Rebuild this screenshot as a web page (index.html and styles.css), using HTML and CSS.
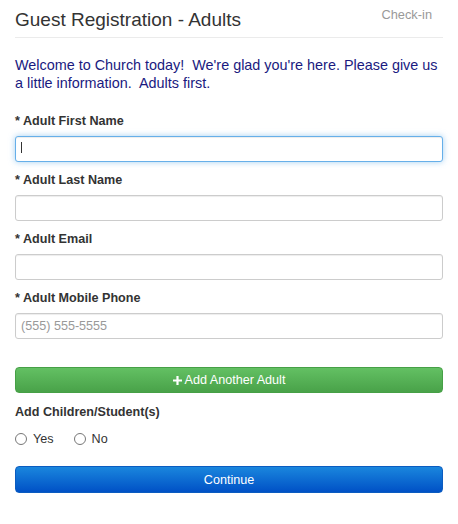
FILE: index.html
```html
<!DOCTYPE html>
<html lang="en">
<head>
<meta charset="utf-8">
<title>Guest Registration - Adults</title>
<link rel="stylesheet" href="styles.css">
</head>
<body>
<div class="page">
  <header class="header">
    <h1 class="title">Guest Registration - Adults</h1>
    <a class="checkin">Check-in</a>
  </header>
  <p class="welcome">Welcome to Church today!&nbsp; We're glad you're here. Please give us a little information.&nbsp; Adults first.</p>
  <form class="form">
    <div class="field">
      <label class="label">* Adult First Name</label>
      <div class="input-wrap">
        <input class="input is-focus" type="text">
        <span class="caret"></span>
      </div>
    </div>
    <div class="field">
      <label class="label">* Adult Last Name</label>
      <input class="input" type="text">
    </div>
    <div class="field">
      <label class="label">* Adult Email</label>
      <input class="input" type="email">
    </div>
    <div class="field">
      <label class="label">* Adult Mobile Phone</label>
      <input class="input" type="tel" placeholder="(555) 555-5555">
    </div>
    <button type="button" class="btn btn-success btn-add">
      <svg class="plus" width="9" height="9" viewBox="0 0 9 9"><path d="M3.4 0h2.2v3.4H9v2.2H5.6V9H3.4V5.6H0V3.4h3.4z" fill="#fff"/></svg>
      <span>Add Another Adult</span>
    </button>
    <div class="label children">Add Children/Student(s)</div>
    <div class="radios">
      <label class="radio"><input type="radio" name="kids"><span>Yes</span></label>
      <label class="radio"><input type="radio" name="kids"><span>No</span></label>
    </div>
    <button type="button" class="btn btn-primary btn-continue">Continue</button>
  </form>
</div>
</body>
</html>
```
FILE: styles.css
```css
* { box-sizing: border-box; }

body {
  margin: 0;
  background: #fff;
  color: #333;
  font-family: "Liberation Sans", Arial, Helvetica, sans-serif;
}

.page {
  padding: 0 15px;
}

.header {
  display: flex;
  justify-content: space-between;
  align-items: flex-start;
  padding: 6px 11px 7px 0;
  border-bottom: 1px solid #ebebeb;
}

.title {
  margin: 3px 0 0;
  font-size: 19px;
  line-height: 21px;
  font-weight: normal;
  color: #333;
}

.checkin {
  margin-top: 2px;
  font-size: 12.8px;
  line-height: 14px;
  color: #999;
}

.welcome {
  margin: 19px 0 0;
  font-size: 14.4px;
  line-height: 17.5px;
  color: #1a1a80;
}

.form {
  margin-top: 22px;
}

.field {
  margin-bottom: 11px;
}

.label {
  display: block;
  font-size: 12.6px;
  line-height: 15px;
  font-weight: bold;
  color: #333;
  margin-bottom: 7px;
}

.input-wrap {
  position: relative;
}

.input {
  display: block;
  width: 100%;
  height: 26px;
  margin: 0;
  padding: 0 5px;
  border: 1px solid #ccc;
  border-radius: 3px;
  background: #fff;
  color: #555;
  font: 12.6px "Liberation Sans", Arial, sans-serif;
  box-shadow: inset 0 1px 1px rgba(0, 0, 0, 0.075);
  outline: none;
}

.input::placeholder {
  color: #999;
}

.input.is-focus {
  border-color: #66afe9;
  box-shadow: inset 0 1px 1px rgba(0, 0, 0, 0.075), 0 0 6px rgba(102, 175, 233, 0.6);
}

.caret {
  position: absolute;
  left: 6px;
  top: 6px;
  width: 1px;
  height: 11px;
  background: #333;
}

.btn {
  display: flex;
  align-items: center;
  justify-content: center;
  gap: 3px;
  width: 100%;
  height: 26px;
  margin: 0;
  padding: 0;
  border: 1px solid;
  border-radius: 4px;
  color: #fff;
  font: 12.6px/14px "Liberation Sans", Arial, sans-serif;
  cursor: pointer;
}

.btn-success {
  background: linear-gradient(to bottom, #63c063, #49a249);
  border-color: #46a046;
}

.btn-add {
  margin-top: 28px;
}

.plus {
  display: block;
}

.children {
  margin: 12px 0 0;
}

.radios {
  display: flex;
  align-items: center;
  gap: 20px;
  height: 16px;
  margin-top: 11px;
}

.radio {
  display: flex;
  align-items: center;
  gap: 6px;
  font-size: 12.6px;
  color: #333;
}

.radio input {
  appearance: none;
  -webkit-appearance: none;
  margin: 0;
  width: 12px;
  height: 12px;
  border: 1px solid #777;
  border-radius: 50%;
  background: #fff;
}

.btn-primary {
  background: linear-gradient(to bottom, #1a86dd, #0051c6);
  border-color: #0b5cc0;
}

.btn-continue {
  height: 27px;
  margin-top: 19px;
}
```
